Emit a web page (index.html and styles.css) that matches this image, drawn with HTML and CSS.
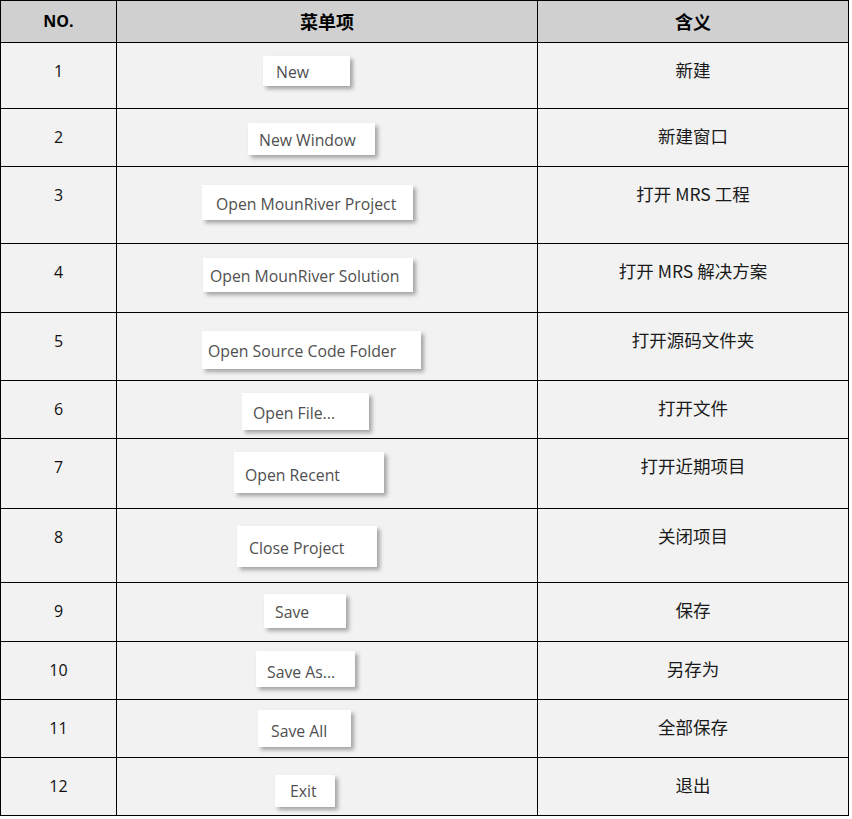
FILE: index.html
```html
<!DOCTYPE html>
<html lang="zh">
<head>
<meta charset="utf-8">
<link rel="stylesheet" href="styles.css">
</head>
<body>
<div class="table">
  <div class="cell head num">NO.</div>
  <div class="cell head cn">菜单项</div>
  <div class="cell head cn">含义</div>

  <div class="cell num">1</div>
  <div class="cell menu"><span class="btn b1">New</span></div>
  <div class="cell cn">新建</div>

  <div class="cell num">2</div>
  <div class="cell menu"><span class="btn b2">New Window</span></div>
  <div class="cell cn">新建窗口</div>

  <div class="cell num">3</div>
  <div class="cell menu"><span class="btn b3">Open MounRiver Project</span></div>
  <div class="cell cn">打开 MRS 工程</div>

  <div class="cell num">4</div>
  <div class="cell menu"><span class="btn b4">Open MounRiver Solution</span></div>
  <div class="cell cn">打开 MRS 解决方案</div>

  <div class="cell num">5</div>
  <div class="cell menu"><span class="btn b5">Open Source Code Folder</span></div>
  <div class="cell cn">打开源码文件夹</div>

  <div class="cell num">6</div>
  <div class="cell menu"><span class="btn b6">Open File...</span></div>
  <div class="cell cn">打开文件</div>

  <div class="cell num">7</div>
  <div class="cell menu"><span class="btn b7">Open Recent</span></div>
  <div class="cell cn">打开近期项目</div>

  <div class="cell num">8</div>
  <div class="cell menu"><span class="btn b8">Close Project</span></div>
  <div class="cell cn">关闭项目</div>

  <div class="cell num">9</div>
  <div class="cell menu"><span class="btn b9">Save</span></div>
  <div class="cell cn">保存</div>

  <div class="cell num">10</div>
  <div class="cell menu"><span class="btn b10">Save As...</span></div>
  <div class="cell cn">另存为</div>

  <div class="cell num">11</div>
  <div class="cell menu"><span class="btn b11">Save All</span></div>
  <div class="cell cn">全部保存</div>

  <div class="cell num">12</div>
  <div class="cell menu"><span class="btn b12">Exit</span></div>
  <div class="cell cn">退出</div>
</div>
</body>
</html>
```

FILE: styles.css
```css
html, body {
  margin: 0;
  padding: 0;
  background: #ffffff;
}

.table {
  display: grid;
  width: 849px;
  grid-template-columns: 115px 420px 310px;
  grid-template-rows: 41px 65px 57px 76px 68px 67px 57px 69px 73px 58px 57px 57px 57px;
  gap: 1px;
  padding: 1px;
  box-sizing: border-box;
  background: #000000;
}

.cell {
  background: #f2f2f2;
  text-align: center;
  padding-top: 17px;
  box-sizing: border-box;
  color: #111111;
  line-height: 22px;
}

.num {
  font-family: "Open Sans", "Noto Sans", sans-serif;
  font-size: 16px;
}

.cn {
  font-family: "Noto Sans CJK SC", "Noto Sans", sans-serif;
  font-size: 17.5px;
  color: #1a1a1a;
  padding-top: 16px;
}

.head {
  background: #d0d0d0;
  padding-top: 9px;
  font-weight: bold;
  color: #000000;
}

.head.num {
  font-size: 16px;
}

.head.cn {
  font-size: 18px;
  padding-top: 9px;
}

.menu {
  padding-top: 0;
  display: flex;
  flex-direction: column;
  align-items: flex-start;
}

.btn {
  display: flex;
  align-items: center;
  box-sizing: border-box;
  background: #ffffff;
  box-shadow: 3px 3px 4px rgba(0, 0, 0, 0.32);
  font-family: "Open Sans", "Noto Sans", sans-serif;
  font-size: 15.8px;
  color: #505050;
  white-space: nowrap;
  padding-top: 2px;
}

.b1  { margin: 13px 0 0 146px; width: 87px;  height: 30px; padding-left: 13px; }
.b2  { margin: 14px 0 0 131px; width: 127px; height: 32px; padding-left: 11px; }
.b3  { margin: 18px 0 0 85px;  width: 211px; height: 35px; padding-left: 14px; }
.b4  { margin: 14px 0 0 86px;  width: 210px; height: 34px; padding-left: 7px; }
.b5  { margin: 18px 0 0 85px;  width: 219px; height: 38px; padding-left: 6px; }
.b6  { margin: 12px 0 0 125px; width: 127px; height: 37px; padding-left: 11px; }
.b7  { margin: 13px 0 0 117px; width: 150px; height: 41px; padding-left: 11px; padding-top: 5px; }
.b8  { margin: 17px 0 0 120px; width: 140px; height: 41px; padding-left: 12px; }
.b9  { margin: 11px 0 0 147px; width: 82px;  height: 34px; padding-left: 11px; }
.b10 { margin: 9px 0 0 139px;  width: 99px;  height: 36px; padding-left: 11px; padding-top: 6px; }
.b11 { margin: 10px 0 0 141px; width: 93px;  height: 37px; padding-left: 13px; padding-top: 4px; }
.b12 { margin: 17px 0 0 158px; width: 60px;  height: 32px; padding-left: 15px; padding-top: 0; }
```
